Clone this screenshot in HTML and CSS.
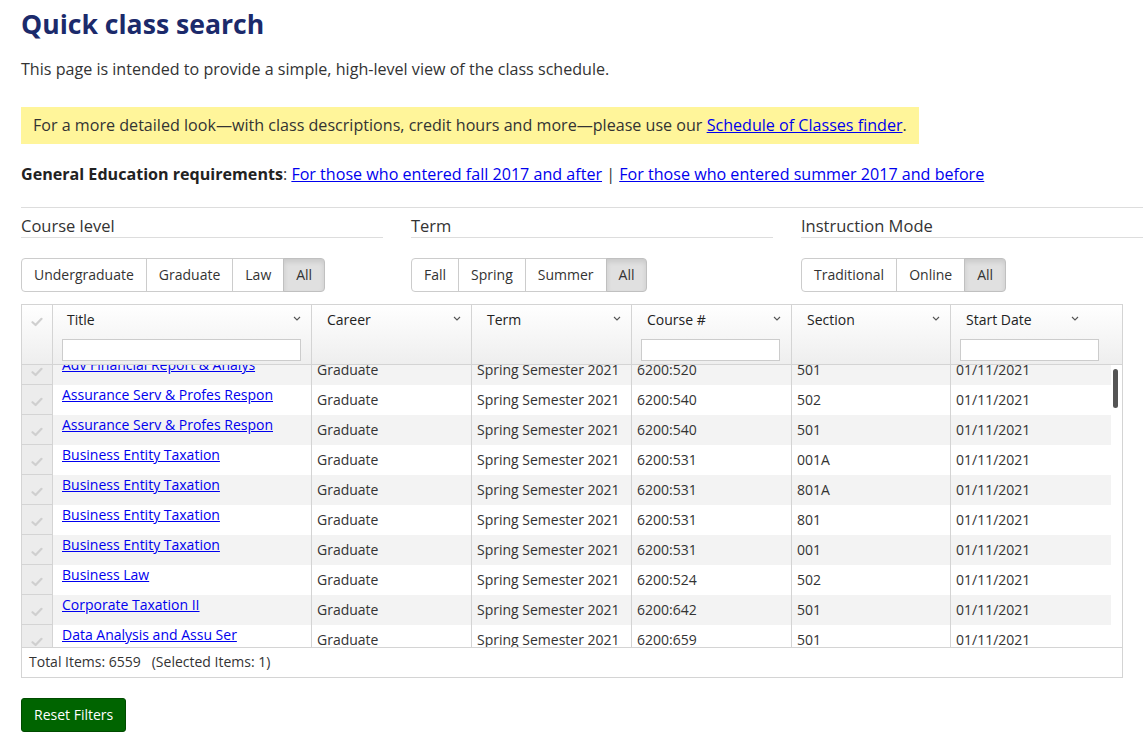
FILE: index.html
```html
<!DOCTYPE html>
<html lang="en">
<head>
<meta charset="utf-8">
<title>Quick class search</title>
<link rel="stylesheet" href="styles.css">
</head>
<body>
<div class="page">
  <h1 class="title">Quick class search</h1>
  <p class="intro">This page is intended to provide a simple, high-level view of the class schedule.</p>
  <div class="notice">For a more detailed look—with class descriptions, credit hours and more—please use our <a href="#">Schedule of Classes finder</a>.</div>
  <p class="gened"><strong>General Education requirements</strong>: <a href="#">For those who entered fall 2017 and after</a> | <a href="#">For those who entered summer 2017 and before</a></p>
  <hr class="rule">
  <div class="filters">
    <div class="filter">
      <h2 class="filter-title">Course level</h2>
      <div class="btn-group">
        <button class="btn">Undergraduate</button><button class="btn">Graduate</button><button class="btn">Law</button><button class="btn active">All</button>
      </div>
    </div>
    <div class="filter">
      <h2 class="filter-title">Term</h2>
      <div class="btn-group">
        <button class="btn">Fall</button><button class="btn">Spring</button><button class="btn">Summer</button><button class="btn active">All</button>
      </div>
    </div>
    <div class="filter">
      <h2 class="filter-title">Instruction Mode</h2>
      <div class="btn-group">
        <button class="btn">Traditional</button><button class="btn">Online</button><button class="btn active">All</button>
      </div>
    </div>
  </div>

  <div class="grid">
    <div class="grid-head">
      <div class="hcell sel"><svg class="check" viewBox="0 0 12 10"><path d="M1.5 5.2 L4.6 8 L10.5 1.8" /></svg></div>
      <div class="hcell"><div class="hlabel"><span>Title</span><svg class="chev" viewBox="0 0 8 5"><path d="M1 1 L4 4 L7 1"/></svg></div><input class="hfilter" type="text"></div>
      <div class="hcell"><div class="hlabel"><span>Career</span><svg class="chev" viewBox="0 0 8 5"><path d="M1 1 L4 4 L7 1"/></svg></div></div>
      <div class="hcell"><div class="hlabel"><span>Term</span><svg class="chev" viewBox="0 0 8 5"><path d="M1 1 L4 4 L7 1"/></svg></div></div>
      <div class="hcell"><div class="hlabel"><span>Course #</span><svg class="chev" viewBox="0 0 8 5"><path d="M1 1 L4 4 L7 1"/></svg></div><input class="hfilter" type="text"></div>
      <div class="hcell"><div class="hlabel"><span>Section</span><svg class="chev" viewBox="0 0 8 5"><path d="M1 1 L4 4 L7 1"/></svg></div></div>
      <div class="hcell last"><div class="hlabel short"><span>Start Date</span><svg class="chev" viewBox="0 0 8 5"><path d="M1 1 L4 4 L7 1"/></svg></div><input class="hfilter" type="text"></div>
    </div>
    <div class="grid-body">
      <div class="rows">
        <div class="row alt"><div class="cell sel"><svg class="check" viewBox="0 0 12 10"><path d="M1.5 5.2 L4.6 8 L10.5 1.8" /></svg></div><div class="cell ttl"><a href="#">Adv Financial Report &amp; Analys</a></div><div class="cell">Graduate</div><div class="cell">Spring Semester 2021</div><div class="cell">6200:520</div><div class="cell">501</div><div class="cell">01/11/2021</div></div>
        <div class="row"><div class="cell sel"><svg class="check" viewBox="0 0 12 10"><path d="M1.5 5.2 L4.6 8 L10.5 1.8" /></svg></div><div class="cell ttl"><a href="#">Assurance Serv &amp; Profes Respon</a></div><div class="cell">Graduate</div><div class="cell">Spring Semester 2021</div><div class="cell">6200:540</div><div class="cell">502</div><div class="cell">01/11/2021</div></div>
        <div class="row alt"><div class="cell sel"><svg class="check" viewBox="0 0 12 10"><path d="M1.5 5.2 L4.6 8 L10.5 1.8" /></svg></div><div class="cell ttl"><a href="#">Assurance Serv &amp; Profes Respon</a></div><div class="cell">Graduate</div><div class="cell">Spring Semester 2021</div><div class="cell">6200:540</div><div class="cell">501</div><div class="cell">01/11/2021</div></div>
        <div class="row"><div class="cell sel"><svg class="check" viewBox="0 0 12 10"><path d="M1.5 5.2 L4.6 8 L10.5 1.8" /></svg></div><div class="cell ttl"><a href="#">Business Entity Taxation</a></div><div class="cell">Graduate</div><div class="cell">Spring Semester 2021</div><div class="cell">6200:531</div><div class="cell">001A</div><div class="cell">01/11/2021</div></div>
        <div class="row alt"><div class="cell sel"><svg class="check" viewBox="0 0 12 10"><path d="M1.5 5.2 L4.6 8 L10.5 1.8" /></svg></div><div class="cell ttl"><a href="#">Business Entity Taxation</a></div><div class="cell">Graduate</div><div class="cell">Spring Semester 2021</div><div class="cell">6200:531</div><div class="cell">801A</div><div class="cell">01/11/2021</div></div>
        <div class="row"><div class="cell sel"><svg class="check" viewBox="0 0 12 10"><path d="M1.5 5.2 L4.6 8 L10.5 1.8" /></svg></div><div class="cell ttl"><a href="#">Business Entity Taxation</a></div><div class="cell">Graduate</div><div class="cell">Spring Semester 2021</div><div class="cell">6200:531</div><div class="cell">801</div><div class="cell">01/11/2021</div></div>
        <div class="row alt"><div class="cell sel"><svg class="check" viewBox="0 0 12 10"><path d="M1.5 5.2 L4.6 8 L10.5 1.8" /></svg></div><div class="cell ttl"><a href="#">Business Entity Taxation</a></div><div class="cell">Graduate</div><div class="cell">Spring Semester 2021</div><div class="cell">6200:531</div><div class="cell">001</div><div class="cell">01/11/2021</div></div>
        <div class="row"><div class="cell sel"><svg class="check" viewBox="0 0 12 10"><path d="M1.5 5.2 L4.6 8 L10.5 1.8" /></svg></div><div class="cell ttl"><a href="#">Business Law</a></div><div class="cell">Graduate</div><div class="cell">Spring Semester 2021</div><div class="cell">6200:524</div><div class="cell">502</div><div class="cell">01/11/2021</div></div>
        <div class="row alt"><div class="cell sel"><svg class="check" viewBox="0 0 12 10"><path d="M1.5 5.2 L4.6 8 L10.5 1.8" /></svg></div><div class="cell ttl"><a href="#">Corporate Taxation II</a></div><div class="cell">Graduate</div><div class="cell">Spring Semester 2021</div><div class="cell">6200:642</div><div class="cell">501</div><div class="cell">01/11/2021</div></div>
        <div class="row"><div class="cell sel"><svg class="check" viewBox="0 0 12 10"><path d="M1.5 5.2 L4.6 8 L10.5 1.8" /></svg></div><div class="cell ttl"><a href="#">Data Analysis and Assu Ser</a></div><div class="cell">Graduate</div><div class="cell">Spring Semester 2021</div><div class="cell">6200:659</div><div class="cell">501</div><div class="cell">01/11/2021</div></div>
      </div>
      <div class="scrollbar"><div class="thumb"></div></div>
    </div>
    <div class="grid-foot">Total Items: 6559 &nbsp; (Selected Items: 1)</div>
  </div>

  <button class="reset">Reset Filters</button>
</div>
</body>
</html>
```

FILE: styles.css
```css
html {
  overflow-x: hidden;
}
body {
  margin: 0;
  font-family: "Open Sans", "DejaVu Sans", sans-serif;
  color: #333;
  background: #fff;
}
.page {
  width: 1150px;
  padding: 5px 0 20px 21px;
}
a {
  color: #0000ee;
}
.title {
  margin: 0;
  font-size: 26.6px;
  line-height: 38px;
  font-weight: 700;
  color: #1b2a6b;
}
.intro {
  margin: 14px 0 0;
  font-size: 16.1px;
  line-height: 24px;
}
.notice {
  width: fit-content;
  margin-top: 26px;
  padding: 8px 12px;
  background: #fff59a;
  font-size: 16.1px;
  line-height: 21px;
}
.gened {
  margin: 18px 0 0;
  font-size: 16.1px;
  line-height: 24px;
}
.gened strong {
  color: #222;
}
.rule {
  margin: 21px 0 0;
  border: 0;
  border-top: 1px solid #ddd;
}
.filters {
  display: grid;
  grid-template-columns: repeat(3, 362px);
  column-gap: 28px;
  margin-top: 7px;
}
.filter-title {
  margin: 0;
  font-size: 16.5px;
  font-weight: 400;
  line-height: 22px;
  border-bottom: 1px solid #ddd;
  color: #333;
}
.btn-group {
  display: flex;
  margin-top: 20px;
}
.btn {
  font-family: "Open Sans", "DejaVu Sans", sans-serif;
  font-size: 14px;
  line-height: 20px;
  padding: 6px 12px;
  color: #333;
  background: #fff;
  border: 1px solid #ccc;
  margin-left: -1px;
  border-radius: 0;
}
.btn:first-child {
  margin-left: 0;
  border-radius: 4px 0 0 4px;
}
.btn:last-child {
  border-radius: 0 4px 4px 0;
}
.btn.active {
  background: #e0e0e0;
  border-color: #c0c0c0;
  box-shadow: inset 0 3px 5px rgba(0, 0, 0, 0.1);
}

/* grid */
.grid {
  width: 1100px;
  margin-top: 12px;
  border: 1px solid #d4d4d4;
  font-size: 14px;
}
.grid-head {
  display: grid;
  grid-template-columns: 31px 259px 160px 160px 160px 159px 1fr;
  height: 59px;
  background: linear-gradient(to bottom, #ffffff, #eeeeee);
  border-bottom: 1px solid #d4d4d4;
  color: #222;
}
.hcell {
  border-right: 1px solid #d4d4d4;
  padding: 5px 9px 0;
}
.hcell.last {
  border-right: 0;
}
.hcell.sel {
  padding: 7px 0 0 9px;
}
.hlabel {
  display: flex;
  justify-content: space-between;
  align-items: center;
  padding: 0 1px 0 5px;
  line-height: 20px;
}
.hcell:nth-child(n+3) .hlabel {
  padding-left: 6px;
}
.hlabel.short {
  width: 113px;
}
.chev {
  width: 8px;
  height: 5px;
  fill: none;
  stroke: #555;
  stroke-width: 1.1;
  margin-top: -3px;
}
.hfilter {
  display: block;
  box-sizing: border-box;
  width: 239px;
  height: 22px;
  margin-top: 9px;
  border: 1px solid #ccc;
  background: #fff;
  padding: 0 4px;
}
.hcell:nth-child(5) .hfilter,
.hcell.last .hfilter {
  width: 139px;
}
.check {
  width: 12px;
  height: 10px;
  fill: none;
  stroke: #cfcfcf;
  stroke-width: 2.2;
  stroke-linecap: round;
  stroke-linejoin: round;
}
.grid-body {
  position: relative;
  height: 282px;
  overflow: hidden;
}
.rows {
  margin-top: -10px;
  width: 1089px;
}
.row {
  display: grid;
  grid-template-columns: 31px 259px 160px 160px 160px 159px 160px;
  height: 30px;
  background: #fff;
  color: #333;
}
.row.alt {
  background: #f3f3f3;
}
.cell {
  border-right: 1px solid #d4d4d4;
  padding: 5px 5px 0;
  line-height: 20px;
  white-space: nowrap;
  overflow: hidden;
}
.cell:last-child {
  border-right: 0;
}
.cell.ttl {
  padding: 0 9px;
}
.cell.sel {
  background: #ececec;
  border-bottom: 1px solid #d4d4d4;
  box-sizing: border-box;
  padding: 7px 0 0 9px;
}
.scrollbar {
  position: absolute;
  top: 0;
  right: 0;
  width: 11px;
  height: 100%;
  background: #fff;
}
.thumb {
  position: absolute;
  top: 4px;
  left: 2px;
  width: 5px;
  height: 39px;
  border-radius: 3px;
  background: #555;
}
.grid-foot {
  border-top: 1px solid #d4d4d4;
  height: 29px;
  line-height: 28px;
  padding-left: 7px;
  color: #333;
}
.reset {
  display: block;
  margin-top: 20px;
  font-family: "Open Sans", "DejaVu Sans", sans-serif;
  font-size: 14px;
  line-height: 20px;
  padding: 6px 12px;
  color: #fff;
  background: #006400;
  border: 1px solid #004b00;
  border-radius: 3px;
}
```
